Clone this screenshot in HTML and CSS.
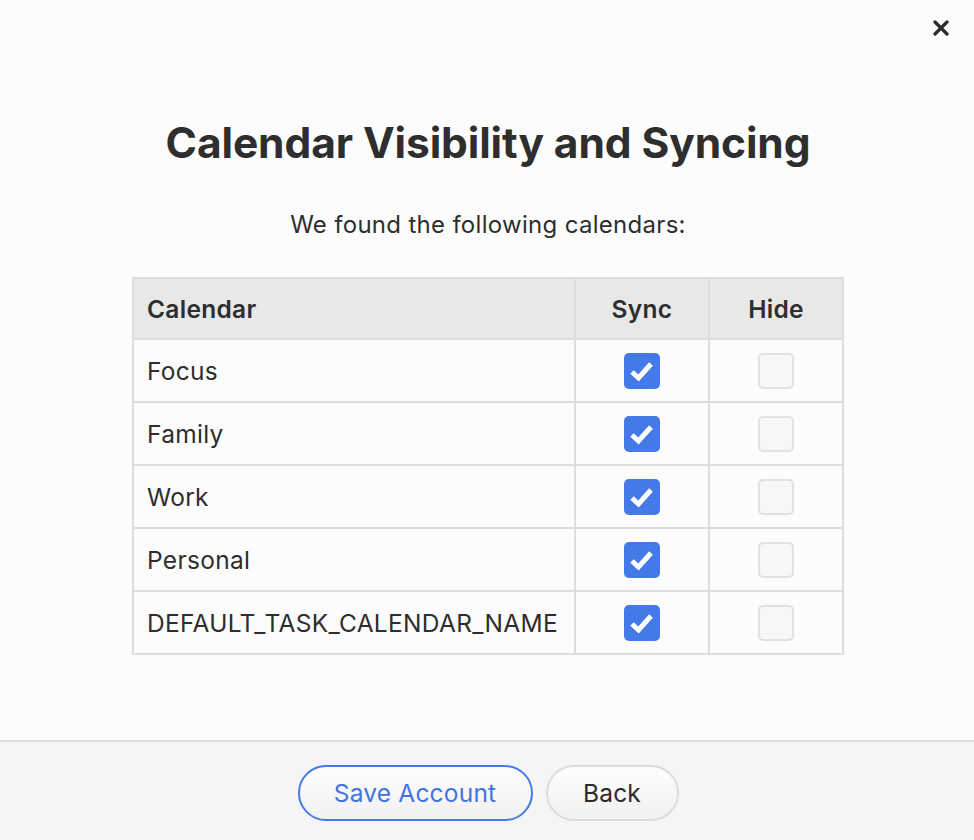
FILE: index.html
```html
<!DOCTYPE html>
<html lang="en">
  <head>
    <meta charset="utf-8">
    <title>Calendar Visibility and Syncing</title>
    <link rel="stylesheet" href="styles.css">
  </head>
  <body>
    <div class="page">
      <button class="close" aria-label="Close">
        <svg width="16" height="16" viewBox="0 0 16 16">
          <path d="M2 2 L14 14 M14 2 L2 14" stroke="#2b2b2b" stroke-width="3.2" stroke-linecap="round"/>
        </svg>
      </button>

      <div class="content">
        <h1>Calendar Visibility and Syncing</h1>
        <p class="lead">We found the following calendars:</p>

        <table class="calendars">
          <tr>
            <th class="name">Calendar</th>
            <th class="check">Sync</th>
            <th class="check">Hide</th>
          </tr>
          <tr>
            <td>Focus</td>
            <td class="check"><span class="box on"></span></td>
            <td class="check"><span class="box"></span></td>
          </tr>
          <tr>
            <td>Family</td>
            <td class="check"><span class="box on"></span></td>
            <td class="check"><span class="box"></span></td>
          </tr>
          <tr>
            <td>Work</td>
            <td class="check"><span class="box on"></span></td>
            <td class="check"><span class="box"></span></td>
          </tr>
          <tr>
            <td>Personal</td>
            <td class="check"><span class="box on"></span></td>
            <td class="check"><span class="box"></span></td>
          </tr>
          <tr>
            <td>DEFAULT_TASK_CALENDAR_NAME</td>
            <td class="check"><span class="box on"></span></td>
            <td class="check"><span class="box"></span></td>
          </tr>
        </table>
      </div>

      <div class="footer">
        <button class="btn primary">Save Account</button>
        <button class="btn">Back</button>
      </div>
    </div>
  </body>
</html>
```

FILE: styles.css
```css
* {
  box-sizing: border-box;
}

body {
  margin: 0;
  background: #fcfcfc;
  color: #2e2e2e;
  font-family: Inter, "Noto Sans", sans-serif;
}

.page {
  position: relative;
  height: 840px;
  display: flex;
  flex-direction: column;
}

/* close button in the corner */
.close {
  position: absolute;
  top: 20px;
  right: 25px;
  border: 0;
  background: none;
  padding: 0;
  width: 16px;
  height: 16px;
}

.content {
  flex: 1;
  display: flex;
  flex-direction: column;
  align-items: center;
  padding-top: 116px;
  padding-left: 2px;
}

h1 {
  margin: 0;
  font-size: 42.5px;
  font-weight: 700;
  letter-spacing: -0.1px;
  line-height: 54px;
}

.lead {
  margin: 40px 0 0;
  font-size: 24px;
  letter-spacing: 0.3px;
  line-height: 30px;
}

.calendars {
  margin-top: 37px;
  width: 712px;
  border-collapse: collapse;
  font-size: 24.5px;
  letter-spacing: 0.3px;
}

.calendars th,
.calendars td {
  border: 2px solid #dddddd;
  height: 63px;
  padding: 0 13px;
  text-align: left;
}

.calendars th {
  background: #e8e8e8;
  font-weight: 600;
  height: 61px;
}

.calendars .check {
  width: 134px;
  text-align: center;
  padding: 0;
}

.box {
  display: inline-block;
  vertical-align: middle;
  width: 36px;
  height: 36px;
  border-radius: 5px;
  background: #f7f7f7;
  border: 2px solid #e2e2e2;
}

.box.on {
  background: #4479e8 url("data:image/svg+xml;utf8,<svg xmlns='http://www.w3.org/2000/svg' viewBox='0 0 36 36'><path d='M8 19 L14.5 25 L27 11' fill='none' stroke='white' stroke-width='5'/></svg>") center / 36px 36px no-repeat;
  border: 0;
}

/* footer with the two pill buttons */
.footer {
  height: 100px;
  border-top: 2px solid #dddddd;
  background: #f5f5f5;
  display: flex;
  justify-content: center;
  align-items: center;
  gap: 13px;
  padding-left: 2px;
  padding-top: 4px;
}

.btn {
  height: 56px;
  border-radius: 28px;
  border: 2px solid #dcdcdc;
  background: linear-gradient(#fdfdfd, #f1f1f1);
  font-family: Inter, "Noto Sans", sans-serif;
  font-size: 24.5px;
  letter-spacing: 0.2px;
  color: #2b2b2b;
  padding: 0;
  white-space: nowrap;
  width: 133px;
}

.btn.primary {
  border-color: #4479e8;
  color: #3f74e2;
  width: 235px;
}
```
